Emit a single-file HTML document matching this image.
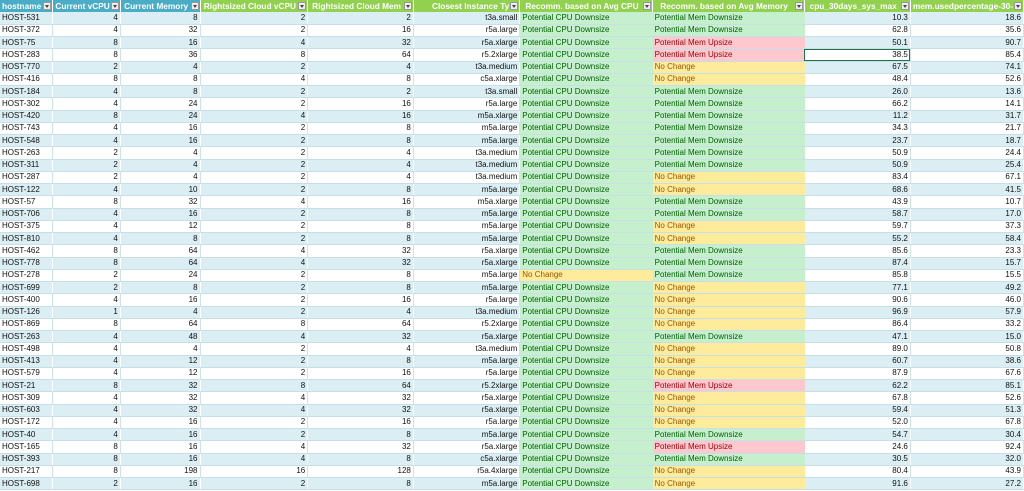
<!DOCTYPE html>
<html><head><meta charset="utf-8"><style>
html,body{margin:0;padding:0;background:#fff;width:1024px;height:491px;overflow:hidden}
table{border-collapse:collapse;table-layout:fixed;font-family:"Liberation Sans",sans-serif;font-size:8px;color:#111;position:absolute;left:0;top:0}
td{padding:0 2px;height:12.25px;line-height:10px;white-space:nowrap;overflow:hidden;text-align:right;border-right:1px solid #cfe3ea;border-bottom:1px solid #c9dfe7;box-sizing:border-box;vertical-align:middle}
td:first-child{text-align:left}
tr.h td{height:12px;background:#92d050;color:#fff;font-weight:bold;font-size:8.3px;text-align:center;position:relative;border-right:1px solid #fff;border-bottom:none;padding-right:10px}
tr.h td.b{background:#4bacc6}
tr.h td:first-child{text-align:left}
tr.h td i{position:absolute;right:1px;top:2px;width:8px;height:8px;background:#eee;border:1px solid #999;box-sizing:border-box}
tr.h td i:after{content:"";position:absolute;left:1px;top:2px;border-left:2.5px solid transparent;border-right:2.5px solid transparent;border-top:3px solid #444}
tr:nth-child(even) td{background:#daeef3;border-right-color:#fff}
td.g,tr:nth-child(even) td.g{background:#c6efce;color:#006100;text-align:left;border-right-color:#c6efce}
td.r,tr:nth-child(even) td.r{background:#ffc7ce;color:#9c0006;text-align:left;border-right-color:#ffc7ce}
td.y,tr:nth-child(even) td.y{background:#ffeb9c;color:#9c5700;text-align:left;border-right-color:#ffeb9c}
td.sel{outline:1px solid #217346;outline-offset:-1px}
</style></head><body>
<table>
<colgroup><col style="width:53px"><col style="width:65px"><col style="width:80px"><col style="width:108px"><col style="width:106px"><col style="width:108px"><col style="width:133px"><col style="width:153px"><col style="width:107px"><col style="width:111px"></colgroup>
<tr class="h"><td class="b">hostname<i></i></td><td class="b">Current vCPU<i></i></td><td class="b">Current Memory<i></i></td><td>Rightsized Cloud vCPU<i></i></td><td>Rightsized Cloud Mem<i></i></td><td style="text-align:right">Closest Instance Ty<i></i></td><td>Recomm. based on Avg CPU<i></i></td><td>Recomm. based on Avg Memory<i></i></td><td>cpu_30days_sys_max<i></i></td><td>mem.usedpercentage-30-<i></i></td></tr>
<tr><td>HOST-531</td><td>4</td><td>8</td><td>2</td><td>2</td><td>t3a.small</td><td class="g">Potential CPU Downsize</td><td class="g">Potential Mem Downsize</td><td>10.3</td><td>18.6</td></tr>
<tr><td>HOST-372</td><td>4</td><td>32</td><td>2</td><td>16</td><td>r5a.large</td><td class="g">Potential CPU Downsize</td><td class="g">Potential Mem Downsize</td><td>62.8</td><td>35.6</td></tr>
<tr><td>HOST-75</td><td>8</td><td>16</td><td>4</td><td>32</td><td>r5a.xlarge</td><td class="g">Potential CPU Downsize</td><td class="r">Potential Mem Upsize</td><td>50.1</td><td>90.7</td></tr>
<tr><td>HOST-283</td><td>8</td><td>36</td><td>8</td><td>64</td><td>r5.2xlarge</td><td class="g">Potential CPU Downsize</td><td class="r">Potential Mem Upsize</td><td class="sel">38.5</td><td>85.4</td></tr>
<tr><td>HOST-770</td><td>2</td><td>4</td><td>2</td><td>4</td><td>t3a.medium</td><td class="g">Potential CPU Downsize</td><td class="y">No Change</td><td>67.5</td><td>74.1</td></tr>
<tr><td>HOST-416</td><td>8</td><td>8</td><td>4</td><td>8</td><td>c5a.xlarge</td><td class="g">Potential CPU Downsize</td><td class="y">No Change</td><td>48.4</td><td>52.6</td></tr>
<tr><td>HOST-184</td><td>4</td><td>8</td><td>2</td><td>2</td><td>t3a.small</td><td class="g">Potential CPU Downsize</td><td class="g">Potential Mem Downsize</td><td>26.0</td><td>13.6</td></tr>
<tr><td>HOST-302</td><td>4</td><td>24</td><td>2</td><td>16</td><td>r5a.large</td><td class="g">Potential CPU Downsize</td><td class="g">Potential Mem Downsize</td><td>66.2</td><td>14.1</td></tr>
<tr><td>HOST-420</td><td>8</td><td>24</td><td>4</td><td>16</td><td>m5a.xlarge</td><td class="g">Potential CPU Downsize</td><td class="g">Potential Mem Downsize</td><td>11.2</td><td>31.7</td></tr>
<tr><td>HOST-743</td><td>4</td><td>16</td><td>2</td><td>8</td><td>m5a.large</td><td class="g">Potential CPU Downsize</td><td class="g">Potential Mem Downsize</td><td>34.3</td><td>21.7</td></tr>
<tr><td>HOST-548</td><td>4</td><td>16</td><td>2</td><td>8</td><td>m5a.large</td><td class="g">Potential CPU Downsize</td><td class="g">Potential Mem Downsize</td><td>23.7</td><td>18.7</td></tr>
<tr><td>HOST-263</td><td>2</td><td>4</td><td>2</td><td>4</td><td>t3a.medium</td><td class="g">Potential CPU Downsize</td><td class="g">Potential Mem Downsize</td><td>50.9</td><td>24.4</td></tr>
<tr><td>HOST-311</td><td>2</td><td>4</td><td>2</td><td>4</td><td>t3a.medium</td><td class="g">Potential CPU Downsize</td><td class="g">Potential Mem Downsize</td><td>50.9</td><td>25.4</td></tr>
<tr><td>HOST-287</td><td>2</td><td>4</td><td>2</td><td>4</td><td>t3a.medium</td><td class="g">Potential CPU Downsize</td><td class="y">No Change</td><td>83.4</td><td>67.1</td></tr>
<tr><td>HOST-122</td><td>4</td><td>10</td><td>2</td><td>8</td><td>m5a.large</td><td class="g">Potential CPU Downsize</td><td class="y">No Change</td><td>68.6</td><td>41.5</td></tr>
<tr><td>HOST-57</td><td>8</td><td>32</td><td>4</td><td>16</td><td>m5a.xlarge</td><td class="g">Potential CPU Downsize</td><td class="g">Potential Mem Downsize</td><td>43.9</td><td>10.7</td></tr>
<tr><td>HOST-706</td><td>4</td><td>16</td><td>2</td><td>8</td><td>m5a.large</td><td class="g">Potential CPU Downsize</td><td class="g">Potential Mem Downsize</td><td>58.7</td><td>17.0</td></tr>
<tr><td>HOST-375</td><td>4</td><td>12</td><td>2</td><td>8</td><td>m5a.large</td><td class="g">Potential CPU Downsize</td><td class="y">No Change</td><td>59.7</td><td>37.3</td></tr>
<tr><td>HOST-810</td><td>4</td><td>8</td><td>2</td><td>8</td><td>m5a.large</td><td class="g">Potential CPU Downsize</td><td class="y">No Change</td><td>55.2</td><td>58.4</td></tr>
<tr><td>HOST-462</td><td>8</td><td>64</td><td>4</td><td>32</td><td>r5a.xlarge</td><td class="g">Potential CPU Downsize</td><td class="g">Potential Mem Downsize</td><td>85.6</td><td>23.3</td></tr>
<tr><td>HOST-778</td><td>8</td><td>64</td><td>4</td><td>32</td><td>r5a.xlarge</td><td class="g">Potential CPU Downsize</td><td class="g">Potential Mem Downsize</td><td>87.4</td><td>15.7</td></tr>
<tr><td>HOST-278</td><td>2</td><td>24</td><td>2</td><td>8</td><td>m5a.large</td><td class="y">No Change</td><td class="g">Potential Mem Downsize</td><td>85.8</td><td>15.5</td></tr>
<tr><td>HOST-699</td><td>2</td><td>8</td><td>2</td><td>8</td><td>m5a.large</td><td class="g">Potential CPU Downsize</td><td class="y">No Change</td><td>77.1</td><td>49.2</td></tr>
<tr><td>HOST-400</td><td>4</td><td>16</td><td>2</td><td>16</td><td>r5a.large</td><td class="g">Potential CPU Downsize</td><td class="y">No Change</td><td>90.6</td><td>46.0</td></tr>
<tr><td>HOST-126</td><td>1</td><td>4</td><td>2</td><td>4</td><td>t3a.medium</td><td class="g">Potential CPU Downsize</td><td class="y">No Change</td><td>96.9</td><td>57.9</td></tr>
<tr><td>HOST-869</td><td>8</td><td>64</td><td>8</td><td>64</td><td>r5.2xlarge</td><td class="g">Potential CPU Downsize</td><td class="y">No Change</td><td>86.4</td><td>33.2</td></tr>
<tr><td>HOST-263</td><td>4</td><td>48</td><td>4</td><td>32</td><td>r5a.xlarge</td><td class="g">Potential CPU Downsize</td><td class="g">Potential Mem Downsize</td><td>47.1</td><td>15.0</td></tr>
<tr><td>HOST-498</td><td>4</td><td>4</td><td>2</td><td>4</td><td>t3a.medium</td><td class="g">Potential CPU Downsize</td><td class="y">No Change</td><td>89.0</td><td>50.8</td></tr>
<tr><td>HOST-413</td><td>4</td><td>12</td><td>2</td><td>8</td><td>m5a.large</td><td class="g">Potential CPU Downsize</td><td class="y">No Change</td><td>60.7</td><td>38.6</td></tr>
<tr><td>HOST-579</td><td>4</td><td>12</td><td>2</td><td>16</td><td>r5a.large</td><td class="g">Potential CPU Downsize</td><td class="y">No Change</td><td>87.9</td><td>67.6</td></tr>
<tr><td>HOST-21</td><td>8</td><td>32</td><td>8</td><td>64</td><td>r5.2xlarge</td><td class="g">Potential CPU Downsize</td><td class="r">Potential Mem Upsize</td><td>62.2</td><td>85.1</td></tr>
<tr><td>HOST-309</td><td>4</td><td>32</td><td>4</td><td>32</td><td>r5a.xlarge</td><td class="g">Potential CPU Downsize</td><td class="y">No Change</td><td>67.8</td><td>52.6</td></tr>
<tr><td>HOST-603</td><td>4</td><td>32</td><td>4</td><td>32</td><td>r5a.xlarge</td><td class="g">Potential CPU Downsize</td><td class="y">No Change</td><td>59.4</td><td>51.3</td></tr>
<tr><td>HOST-172</td><td>4</td><td>16</td><td>2</td><td>16</td><td>r5a.large</td><td class="g">Potential CPU Downsize</td><td class="y">No Change</td><td>52.0</td><td>67.8</td></tr>
<tr><td>HOST-40</td><td>4</td><td>16</td><td>2</td><td>8</td><td>m5a.large</td><td class="g">Potential CPU Downsize</td><td class="g">Potential Mem Downsize</td><td>54.7</td><td>30.4</td></tr>
<tr><td>HOST-165</td><td>8</td><td>16</td><td>4</td><td>32</td><td>r5a.xlarge</td><td class="g">Potential CPU Downsize</td><td class="r">Potential Mem Upsize</td><td>24.6</td><td>92.4</td></tr>
<tr><td>HOST-393</td><td>8</td><td>16</td><td>4</td><td>8</td><td>c5a.xlarge</td><td class="g">Potential CPU Downsize</td><td class="g">Potential Mem Downsize</td><td>30.5</td><td>32.0</td></tr>
<tr><td>HOST-217</td><td>8</td><td>198</td><td>16</td><td>128</td><td>r5a.4xlarge</td><td class="g">Potential CPU Downsize</td><td class="y">No Change</td><td>80.4</td><td>43.9</td></tr>
<tr><td>HOST-698</td><td>2</td><td>16</td><td>2</td><td>8</td><td>m5a.large</td><td class="g">Potential CPU Downsize</td><td class="y">No Change</td><td>91.6</td><td>27.2</td></tr>
</table>
</body></html>
